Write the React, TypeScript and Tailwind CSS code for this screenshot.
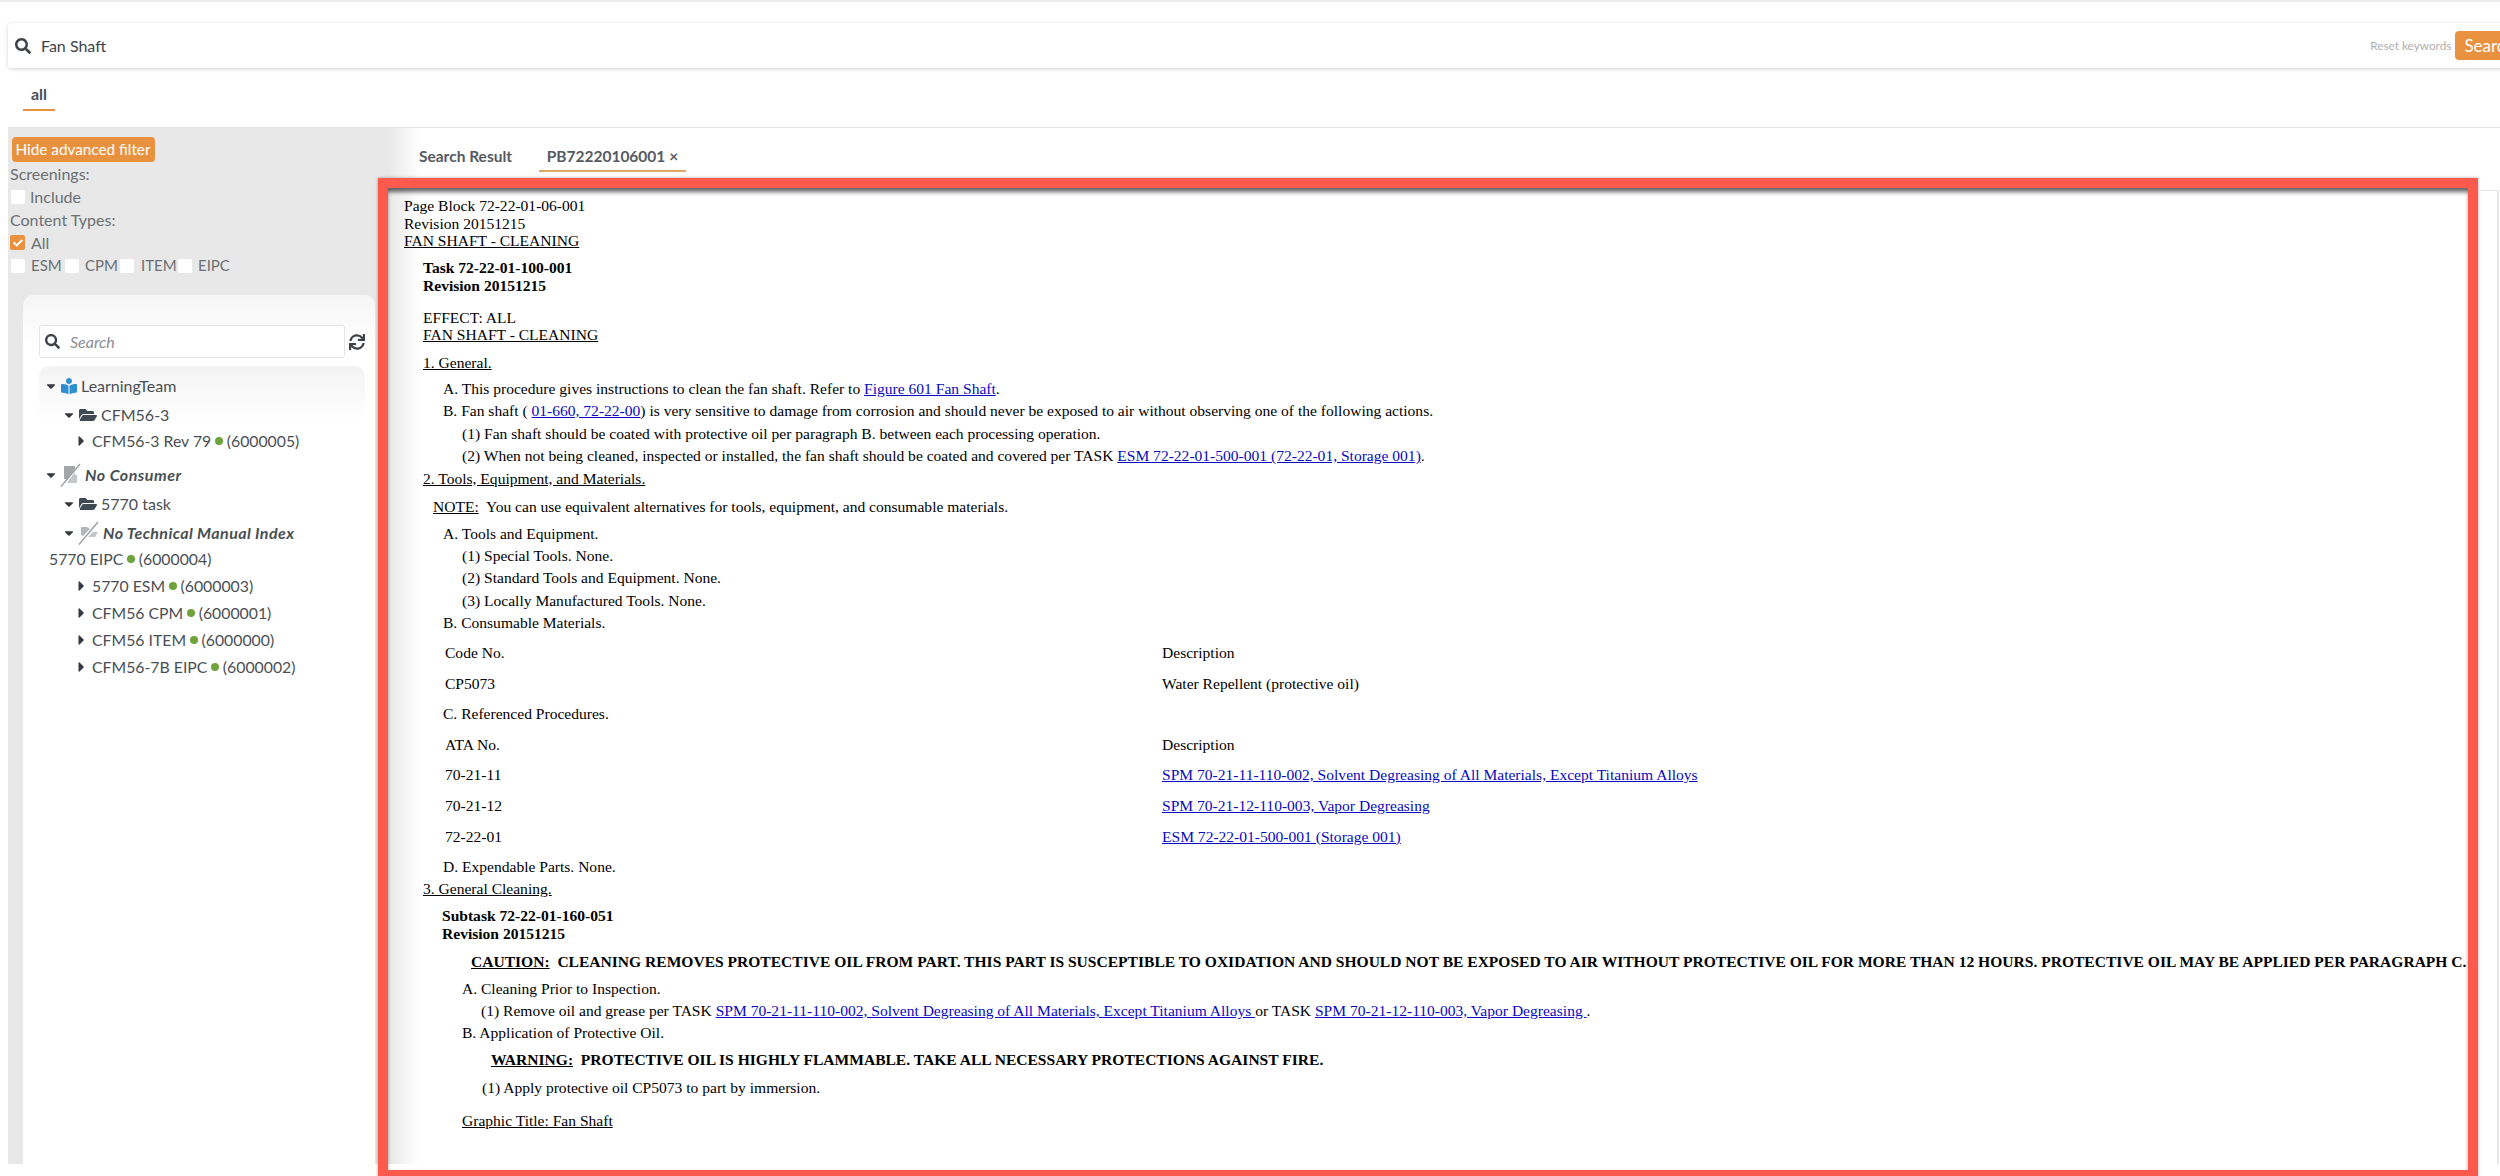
import React from "react";
import { FaSearch, FaSync, FaCaretDown, FaCaretRight, FaFolderOpen, FaBookReader, FaCheck } from "react-icons/fa";

const A = ({ children }: { children: React.ReactNode }) => (
  <a className="text-[#0a0ac0] underline">{children}</a>
);

const Box = ({ className = "" }: { className?: string }) => (
  <span className={`inline-block h-[14px] w-[14px] shrink-0 rounded-[2px] bg-white ${className}`} />
);

const Dot = () => <span className="mx-[4px] inline-block h-[7.5px] w-[7.5px] rounded-full bg-[#6da33a]" />;

const NoConsumer = () => (
  <svg width="21" height="24" viewBox="0 0 21 24" className="shrink-0">
    <path d="M4 3h11v3l-8 10H4z" fill="#a4a7aa" />
    <path d="M9 17l6-8v3h2v8H7z" fill="#c4c7c9" />
    <path d="M1 23.5L20 1" stroke="#9a9da0" strokeWidth="1.3" />
  </svg>
);

const NoIndex = () => (
  <svg width="21" height="24" viewBox="0 0 21 24" className="shrink-0">
    <path d="M3 6h6l3 2-7 7-2-1z" fill="#b3b6b8" />
    <path d="M10 16l5-5h5l-3 5z" fill="#c4c7c9" />
    <path d="M1 23.5L20 1" stroke="#9a9da0" strokeWidth="1.3" />
  </svg>
);

const Leaf = ({ name, id, className }: { name: string; id: string; className: string }) => (
  <div className={`flex items-center pl-[38px] text-[15.8px] ${className}`}>
    <FaCaretRight className="h-[16px] w-[9px] shrink-0 text-[#343a40]" />
    <span className="ml-[6px]">{name}</span>
    <Dot />
    <span>({id})</span>
  </div>
);

export default function App() {
  return (
    <div className="h-[1176px] w-[2500px] overflow-hidden border-t-2 border-[#eeeeee] bg-white font-['Lato',sans-serif] text-[16px] text-[#4a4f54]">
      <div className="ml-2 mt-[21px] flex h-[45px] w-[2600px] items-center rounded-[4px] bg-white pl-[7px] shadow-[0_1px_4px_rgba(0,0,0,0.18)]">
        <FaSearch className="h-[16px] w-[16px] text-[#3d4348]" />
        <span className="ml-[10px] text-[#3d4348]">Fan Shaft</span>
        <span className="ml-[2264px] text-[11.8px] text-[#b0b0b0]">Reset keywords</span>
        <span className="ml-[4px] flex h-[29px] w-[90px] items-center rounded-[4px] bg-[#e8923f] pl-[9px] text-[17px] text-white">Search</span>
      </div>

      <div className="ml-2 flex h-[60px] border-b border-[#e2e2e2] pl-[15px]">
        <div className="mt-[14px] flex h-[29px] w-[32px] justify-center border-b-2 border-[#e8923f] font-bold text-[#4a4f54]">all</div>
      </div>

      <div className="ml-2 flex h-[1036px]">
        <aside className="flex w-[370px] shrink-0 flex-col bg-[#e8e8e8] text-[16px] leading-[23px] text-[#6c7074]">
          <div className="ml-[3.5px] mt-[9px] flex h-[25px] w-[143px] items-center justify-center rounded-[4px] bg-[#e8923f] text-[15.3px] text-white">Hide advanced filter</div>
          <div className="pl-[2px]">Screenings:</div>
          <div className="flex items-center pl-[3px]"><Box /><span className="ml-[5px]">Include</span></div>
          <div className="pl-[2px]">Content Types:</div>
          <div className="flex items-center pl-[2px]">
            <span className="flex h-[15px] w-[15px] items-center justify-center rounded-[2px] bg-[#e8923f]"><FaCheck className="h-[10px] w-[10px] text-white" /></span>
            <span className="ml-[6px]">All</span>
          </div>
          <div className="flex items-center pl-[3px] text-[15px]">
            <Box /><span className="ml-[6px] w-[30px]">ESM</span>
            <Box className="ml-[4px]" /><span className="ml-[6px] w-[32px]">CPM</span>
            <Box className="ml-[3px]" /><span className="ml-[7px] w-[33px]">ITEM</span>
            <Box className="ml-[4px]" /><span className="ml-[6px]">EIPC</span>
          </div>

          <div className="ml-[15px] mt-[18px] w-[352px] flex-1 rounded-t-[10px] bg-[linear-gradient(180deg,#f5f5f5,#ffffff_50px)] px-[16px] pt-[30px] text-[#4a4f54]">
            <div className="flex w-[330px] items-center">
              <div className="flex h-[33px] w-[306px] shrink-0 items-center rounded-[3px] border border-[#e4e4e4] bg-white pl-[5px]">
                <FaSearch className="h-[15px] w-[15px] text-[#3d4348]" />
                <span className="ml-[10px] italic text-[#8a8e92]">Search</span>
              </div>
              <FaSync className="ml-[4px] h-[16px] w-[16px] shrink-0 text-[#3d4348]" />
            </div>

            <div className="mt-[8px] w-[326px] rounded-t-[10px] bg-[linear-gradient(180deg,#f3f3f3,#ffffff_55px)] pt-[8px] leading-[24px]">
              <div className="flex items-center pl-[7px]">
                <FaCaretDown className="h-[14px] w-[10px] shrink-0 text-[#343a40]" />
                <FaBookReader className="ml-[5px] h-[16px] w-[16px] text-[#2f8fd3]" />
                <span className="ml-[4px]">LearningTeam</span>
              </div>
              <div className="mt-[5px] flex items-center pl-[25px]">
                <FaCaretDown className="h-[14px] w-[10px] shrink-0 text-[#343a40]" />
                <FaFolderOpen className="ml-[5px] h-[16px] w-[18px] text-[#3f4a55]" />
                <span className="ml-[4px]">CFM56-3</span>
              </div>
              <Leaf name="CFM56-3 Rev 79" id="6000005" className="mt-[2px]" />
              <div className="mt-[10px] flex items-center pl-[7px]">
                <FaCaretDown className="h-[14px] w-[10px] shrink-0 text-[#343a40]" />
                <span className="ml-[4px]"><NoConsumer /></span>
                <span className="ml-[4px] font-bold italic tracking-[0.5px]">No Consumer</span>
              </div>
              <div className="mt-[5px] flex items-center pl-[25px]">
                <FaCaretDown className="h-[14px] w-[10px] shrink-0 text-[#343a40]" />
                <FaFolderOpen className="ml-[5px] h-[16px] w-[18px] text-[#3f4a55]" />
                <span className="ml-[4px]">5770 task</span>
              </div>
              <div className="mt-[5px] flex items-center pl-[25px]">
                <FaCaretDown className="h-[14px] w-[10px] shrink-0 text-[#343a40]" />
                <span className="ml-[4px]"><NoIndex /></span>
                <span className="ml-[4px] font-bold italic tracking-[0.4px]">No Technical Manual Index</span>
              </div>
              <div className="mt-[2px] flex items-center pl-[10px] text-[15.8px]">
                <span>5770 EIPC</span><Dot /><span>(6000004)</span>
              </div>
              <Leaf name="5770 ESM" id="6000003" className="mt-[3px]" />
              <Leaf name="CFM56 CPM" id="6000001" className="mt-[3px]" />
              <Leaf name="CFM56 ITEM" id="6000000" className="mt-[3px]" />
              <Leaf name="CFM56-7B EIPC" id="6000002" className="mt-[3px]" />
            </div>
          </div>
        </aside>

        <main className="h-[1036px] flex-1 bg-[linear-gradient(90deg,#e8e8e8,#e8e8e8_10px,#ffffff_42px)]">
          <div className="flex h-[50px] pl-[33px] text-[15.5px] font-bold text-[#555a5f]">
            <div className="mt-[17px] h-[27px] w-[128px] pl-[8px]">Search Result</div>
            <div className="mt-[17px] flex h-[27px] w-[147px] justify-center gap-[4px] border-b-2 border-[#e0a860] text-[#555a5f]">
              <span>PB72220106001</span><span>×</span>
            </div>
          </div>
          <div className="flex">
            <div className="h-[1002px] w-[2100px] shrink-0 border-[10px] border-[#fd5a4e] pl-[16px] pt-[9px] font-['Liberation_Serif',serif] text-[15.55px] leading-[17.5px] text-black shadow-[0_0_3px_rgba(0,0,0,0.35),inset_0_5px_4px_-1px_rgba(0,0,0,0.6)]">
              <div>Page Block 72-22-01-06-001</div>
              <div>Revision 20151215</div>
              <div className="underline">FAN SHAFT - CLEANING</div>

              <div className="ml-[19px]">
                <div className="mt-[9.5px] font-bold">Task 72-22-01-100-001</div>
                <div className="font-bold">Revision 20151215</div>
                <div className="mt-[14.5px]">EFFECT: ALL</div>
                <div className="underline">FAN SHAFT - CLEANING</div>
                <div className="mt-[10.5px] underline">1. General.</div>

                <div className="ml-[20px] mt-[8.5px]">A. This procedure gives instructions to clean the fan shaft. Refer to <A>Figure 601 Fan Shaft</A>.</div>
                <div className="ml-[20px] mt-[4.9px]">B. Fan shaft ( <A>01-660, 72-22-00</A>) is very sensitive to damage from corrosion and should never be exposed to air without observing one of the following actions.</div>
                <div className="ml-[39px] mt-[4.9px]">(1) Fan shaft should be coated with protective oil per paragraph B. between each processing operation.</div>
                <div className="ml-[39px] mt-[4.9px]">(2) When not being cleaned, inspected or installed, the fan shaft should be coated and covered per TASK <A>ESM 72-22-01-500-001 (72-22-01, Storage 001)</A>.</div>
                <div className="mt-[4.9px] underline">2. Tools, Equipment, and Materials.</div>
                <div className="ml-[10px] mt-[10.5px]"><span className="underline">NOTE:</span>&nbsp; You can use equivalent alternatives for tools, equipment, and consumable materials.</div>
                <div className="ml-[20px] mt-[9.5px]">A. Tools and Equipment.</div>
                <div className="ml-[39px] mt-[4.9px]">(1) Special Tools. None.</div>
                <div className="ml-[39px] mt-[4.9px]">(2) Standard Tools and Equipment. None.</div>
                <div className="ml-[39px] mt-[4.9px]">(3) Locally Manufactured Tools. None.</div>
                <div className="ml-[20px] mt-[4.9px]">B. Consumable Materials.</div>

                <div className="ml-[22px] mt-[12.5px] grid grid-cols-[717px_1fr] gap-y-[13px]">
                  <div>Code No.</div><div>Description</div>
                  <div>CP5073</div><div>Water Repellent (protective oil)</div>
                </div>
                <div className="ml-[20px] mt-[13px]">C. Referenced Procedures.</div>
                <div className="ml-[22px] mt-[13px] grid grid-cols-[717px_1fr] gap-y-[13.2px]">
                  <div>ATA No.</div><div>Description</div>
                  <div>70-21-11</div><div><A>SPM 70-21-11-110-002, Solvent Degreasing of All Materials, Except Titanium Alloys</A></div>
                  <div>70-21-12</div><div><A>SPM 70-21-12-110-003, Vapor Degreasing</A></div>
                  <div>72-22-01</div><div><A>ESM 72-22-01-500-001 (Storage 001)</A></div>
                </div>
                <div className="ml-[20px] mt-[12.5px]">D. Expendable Parts. None.</div>
                <div className="mt-[5px] underline">3. General Cleaning.</div>

                <div className="ml-[19px]">
                  <div className="mt-[9.5px] font-bold">Subtask 72-22-01-160-051</div>
                  <div className="font-bold">Revision 20151215</div>
                  <div className="ml-[29px] mt-[10.5px] font-bold"><span className="underline">CAUTION:</span>&nbsp; CLEANING REMOVES PROTECTIVE OIL FROM PART. THIS PART IS SUSCEPTIBLE TO OXIDATION AND SHOULD NOT BE EXPOSED TO AIR WITHOUT PROTECTIVE OIL FOR MORE THAN 12 HOURS. PROTECTIVE OIL MAY BE APPLIED PER PARAGRAPH C.</div>
                  <div className="ml-[20px] mt-[9.5px]">A. Cleaning Prior to Inspection.</div>
                  <div className="ml-[39px] mt-[4.9px]">(1) Remove oil and grease per TASK <A>SPM 70-21-11-110-002, Solvent Degreasing of All Materials, Except Titanium Alloys </A> or TASK <A>SPM 70-21-12-110-003, Vapor Degreasing </A> .</div>
                  <div className="ml-[20px] mt-[4.9px]">B. Application of Protective Oil.</div>
                  <div className="ml-[49px] mt-[9.5px] font-bold"><span className="underline">WARNING:</span>&nbsp; PROTECTIVE OIL IS HIGHLY FLAMMABLE. TAKE ALL NECESSARY PROTECTIONS AGAINST FIRE.</div>
                  <div className="ml-[40px] mt-[10.5px]">(1) Apply protective oil CP5073 to part by immersion.</div>
                  <div className="ml-[20px] mt-[15.5px] underline">Graphic Title: Fan Shaft</div>
                </div>
              </div>
            </div>
            <div className="ml-[0px] mt-[12px] h-[974px] w-[21px] border-r-2 border-t border-[#e6e6e6]" />
          </div>
        </main>
      </div>
    </div>
  );
}
